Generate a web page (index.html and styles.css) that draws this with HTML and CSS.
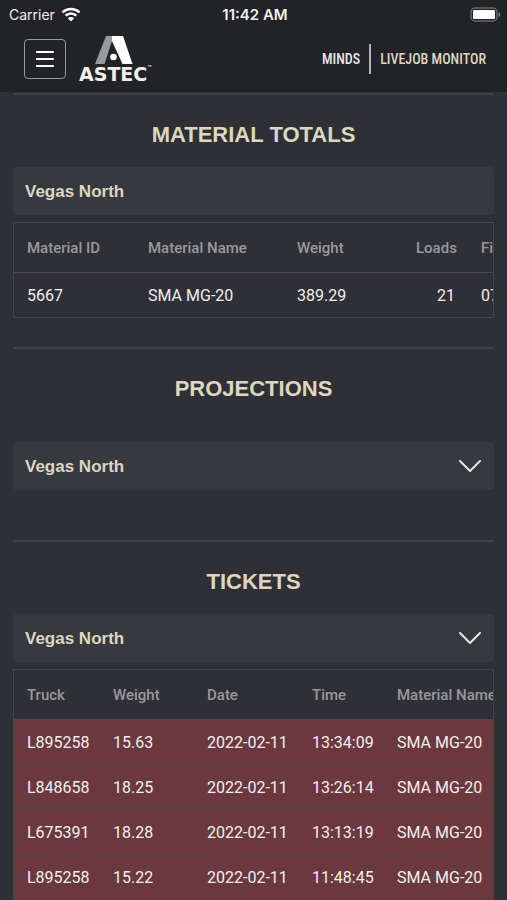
FILE: index.html
```html
<!DOCTYPE html>
<html lang="en">
<head>
<meta charset="utf-8">
<meta name="viewport" content="width=device-width, initial-scale=1">
<title>Astec LiveJob Monitor</title>
<link rel="stylesheet" href="styles.css">
</head>
<body>
<header class="app-header">
  <div class="status">
    <div class="carrier">Carrier
      <svg class="wifi" viewBox="0 0 20 15" aria-hidden="true">
        <path d="M1.500 5.400C6.200 1 13.800 1 18.500 5.400M4.600 8.600C7.600 5.700 12.400 5.700 15.400 8.600" fill="none" stroke="#fff" stroke-width="2.500"/>
        <path d="M10 14.500 6.800 11.300C8.600 9.700 11.400 9.700 13.200 11.300Z" fill="#fff"/>
      </svg>
    </div>
    <div class="clock">11:42 AM</div>
    <svg class="battery" viewBox="0 0 31 15" aria-hidden="true">
      <rect x="1" y="1" width="26" height="13" rx="4" fill="none" stroke="#66676a" stroke-width="1.500"/>
      <rect x="3" y="3" width="22" height="9" rx="1" fill="#fff"/>
      <path d="M28.500 5v5q2-.5 2-2.500t-2-2.500" fill="#77787b"/>
    </svg>
  </div>
  <div class="bar">
    <button class="menu" type="button" aria-label="Menu">
      <svg viewBox="0 0 20 18" aria-hidden="true"><path d="M2 2h16M2 9h16M2 16h16" stroke="#fff" stroke-width="2.200" stroke-linecap="round"/></svg>
    </button>
    <div class="brand">
      <svg class="mark" viewBox="0 0 38 30" aria-hidden="true">
        <path d="M11 1H18L17 6 9.500 29H0Z" fill="#98999b"/>
        <path d="M17 1H28L37.500 29H27.500L17 6Z" fill="#fff"/>
        <circle cx="18.500" cy="22" r="3.300" fill="#fff"/>
      </svg>
      <span class="wordmark">ASTEC<sup>™</sup></span>
    </div>
    <nav class="links">
      <a href="#minds">MINDS</a>
      <a class="active" href="#monitor">LIVEJOB MONITOR</a>
    </nav>
  </div>
</header>
<main>
  <section class="totals">
    <h2>MATERIAL TOTALS</h2>
    <h3 class="panel">Vegas North</h3>
    <div class="scroller">
      <table class="materials">
        <colgroup><col class="c-id"><col class="c-name"><col class="c-weight"><col class="c-loads"><col class="c-first"></colgroup>
        <thead><tr><th>Material ID</th><th>Material Name</th><th>Weight</th><th class="num">Loads</th><th>Fir</th></tr></thead>
        <tbody><tr><td>5667</td><td>SMA MG-20</td><td>389.29</td><td class="num">21</td><td>07</td></tr></tbody>
      </table>
    </div>
  </section>
  <section class="projections">
    <h2>PROJECTIONS</h2>
    <button class="panel" type="button">Vegas North
      <svg class="chevron" viewBox="0 0 24 14" aria-hidden="true"><path d="M2 1 12 11 22 1"/></svg>
    </button>
  </section>
  <section class="tickets">
    <h2>TICKETS</h2>
    <button class="panel" type="button">Vegas North
      <svg class="chevron" viewBox="0 0 24 14" aria-hidden="true"><path d="M2 1 12 11 22 1"/></svg>
    </button>
    <div class="scroller">
      <table class="loads">
        <colgroup><col class="c-truck"><col class="c-tons"><col class="c-date"><col class="c-time"><col class="c-mat"></colgroup>
        <thead><tr><th>Truck</th><th>Weight</th><th>Date</th><th>Time</th><th>Material Name</th></tr></thead>
        <tbody>
          <tr><td>L895258</td><td>15.63</td><td>2022-02-11</td><td>13:34:09</td><td>SMA MG-20</td></tr>
          <tr><td>L848658</td><td>18.25</td><td>2022-02-11</td><td>13:26:14</td><td>SMA MG-20</td></tr>
          <tr><td>L675391</td><td>18.28</td><td>2022-02-11</td><td>13:13:19</td><td>SMA MG-20</td></tr>
          <tr><td>L895258</td><td>15.22</td><td>2022-02-11</td><td>11:48:45</td><td>SMA MG-20</td></tr>
        </tbody>
      </table>
    </div>
  </section>
</main>
</body>
</html>
```
FILE: styles.css
```css
* { box-sizing: border-box; }
body {
  margin: 0;
  background: #2f3035;
  color: #f0eff0;
  font-family: Roboto, "Liberation Sans", sans-serif;
  font-size: 16px;
}
.app-header { background: #222326; padding-bottom: 9px; }
.status {
  display: grid;
  grid-template-columns: 1fr auto 1fr;
  align-items: center;
  height: 28px;
  padding: 0 6px 0 9px;
  font-family: Inter, Roboto, sans-serif;
  font-size: 14px;
}
.carrier { display: flex; align-items: center; gap: 6px; }
.wifi { width: 20px; height: 15px; }
.clock { font-size: 15px; font-weight: 600; }
.battery { width: 31px; height: 15px; justify-self: end; }
.bar { display: flex; align-items: center; height: 55px; padding: 6px 21px 0 24px; }
.menu {
  display: grid;
  place-items: center;
  width: 42px;
  height: 40px;
  padding: 0;
  background: none;
  border: 1px solid #98999c;
  border-radius: 4px;
}
.menu svg { width: 20px; height: 18px; }
.brand { display: flex; flex-direction: column; align-items: center; margin-left: 13px; }
.mark { width: 38px; height: 30px; margin-right: 4px; }
.wordmark {
  font-family: "DejaVu Sans", sans-serif;
  font-weight: 700;
  font-size: 19px;
  line-height: 18px;
}
.wordmark sup { font-size: 5px; line-height: 5px; vertical-align: top; }
.links { display: flex; align-items: center; margin-left: auto; }
.links a {
  color: #e6e6e7;
  font-family: "Roboto Condensed", "Liberation Sans Narrow", "Liberation Sans", sans-serif;
  font-size: 14px;
  font-weight: 500;
  line-height: 30px;
  text-decoration: none;
  white-space: nowrap;
}
.links .active { color: #dcd7be; margin-left: 9px; padding-left: 9px; border-left: 2px solid #b6b6b9; }
main { padding: 1px 13px 0; }
section { border-top: 2px solid #404146; }
h2 {
  margin: 0;
  color: #dcd7be;
  font-family: "Liberation Sans", Arial, sans-serif;
  font-size: 22px;
  font-weight: 700;
  line-height: 28px;
  text-align: center;
}
.totals { padding: 26px 0 29px; }
.totals h2 { margin-bottom: 18px; }
.projections { padding: 26px 0 50px; }
.projections h2 { margin-bottom: 39px; }
.tickets { padding: 26px 0 0; }
.tickets h2 { margin-bottom: 18px; }
.panel {
  display: flex;
  align-items: center;
  justify-content: space-between;
  width: 100%;
  height: 48px;
  margin: 0;
  padding: 1px 12px 0;
  border: 0;
  border-radius: 4px;
  background: #36393e;
  color: #dcd7be;
  font-family: "Liberation Sans", Arial, sans-serif;
  font-size: 17px;
  font-weight: 700;
}
.chevron { width: 24px; height: 14px; fill: none; stroke: #e6e6e7; stroke-width: 2; stroke-linecap: round; stroke-linejoin: round; }
.scroller { margin-top: 7px; border: 1px solid #43464b; overflow: hidden; }
table { table-layout: fixed; border-collapse: separate; border-spacing: 0; }
.materials { width: 600px; }
.loads { width: 519px; }
.c-id { width: 121px; }
.c-name { width: 149px; }
.c-weight { width: 119px; }
.c-loads { width: 65px; }
.c-truck { width: 86px; }
.c-tons { width: 94px; }
.c-date { width: 105px; }
.c-time { width: 85px; }
th, td { padding: 0 12px 0 13px; text-align: left; white-space: nowrap; }
th { height: 49px; color: #98999d; font-size: 15px; font-weight: 500; }
td { height: 45px; border-top: 1px solid #4c4a50; font-weight: 400; }
.materials .num { padding-right: 13px; text-align: right; }
.loads tbody { background: #6b393d; }
```
